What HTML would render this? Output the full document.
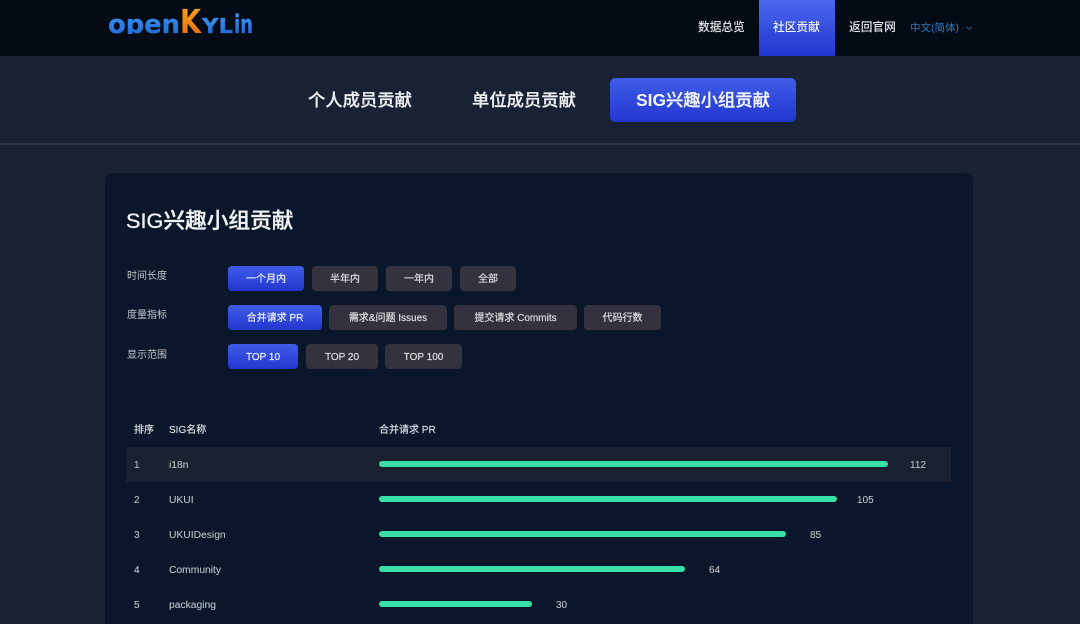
<!DOCTYPE html>
<html lang="zh-CN"><head><meta charset="utf-8"><title>openKylin</title>
<style>
html,body{margin:0;padding:0;width:1080px;height:624px;overflow:hidden;background:#192234}
body{position:relative;font-family:"Liberation Sans","Noto Sans CJK SC",sans-serif;color:#e6e8ec}
div{position:absolute;white-space:nowrap}
.hd{left:0;top:0;width:1080px;height:56px;background:#050b14}
.nav{top:20px;font-size:11.7px;line-height:16px;font-weight:500;color:#e4e6ea}
.act{left:759px;top:0;width:76px;height:56px;background:linear-gradient(180deg,#4a68ee,#2236cf)}
.tab{top:88px;font-size:17.33px;line-height:24px;font-weight:500;color:#eceef1;-webkit-text-stroke:.25px currentColor}
.sel{left:610px;top:78px;width:186px;height:44px;border-radius:5px;background:linear-gradient(180deg,#3f5ce8,#2337cf);text-align:center;line-height:44px;font-size:17.33px;font-weight:500;color:#f2f4f8;-webkit-text-stroke:.25px currentColor}
.sel b{font-weight:700;-webkit-text-stroke:0}
.line{left:0;top:143px;width:1080px;height:2px;background:#2b3447}
.card{left:105px;top:173px;width:868px;height:460px;background:#0a172a;border-radius:8px}
.title{left:126px;top:206px;font-size:21.7px;line-height:30px;font-weight:500;color:#f0f2f5;-webkit-text-stroke:.3px currentColor}
.lb{left:127px;font-size:10px;line-height:14px;color:#c4c8ce}
.b{height:25px;line-height:27px;border-radius:4px;background:#33323e;color:#dcdde0;font-size:10px;text-align:center;font-weight:400;-webkit-text-stroke:.2px currentColor}
.on{background:linear-gradient(180deg,#3f5ce8,#2337cf);color:#eef1fa}
.th{top:424px;font-size:10px;line-height:14px;font-weight:400;color:#d8dade;-webkit-text-stroke:.2px currentColor}
.row{left:126px;top:447px;width:825px;height:35px;background:#1a2130}
.t{font-size:10px;line-height:14px;color:#bcc0c7;-webkit-text-stroke:.1px currentColor;margin-top:1px}
.n{font-size:10.3px}
.bar{left:379px;height:6px;border-radius:3px;background:#38e0a8}
</style></head><body>
<div class="hd"></div>
<svg style="position:absolute;left:0;top:0" width="300" height="56" viewBox="0 0 300 56">
<defs>
<linearGradient id="bl" x1="0" y1="0" x2="0" y2="1"><stop offset="0" stop-color="#3f9cf8"/><stop offset="1" stop-color="#1c5fd0"/></linearGradient>
<linearGradient id="or" x1="0" y1="0" x2="0" y2="1"><stop offset="0" stop-color="#f9a91e"/><stop offset="1" stop-color="#e9660f"/></linearGradient>
<clipPath id="cp"><rect x="100" y="5" width="170" height="29"/></clipPath>
</defs>
<g clip-path="url(#cp)" font-family="'DejaVu Sans',sans-serif" font-weight="700">
<text x="108" y="33" font-size="26" fill="url(#bl)" stroke="#2a78e4" stroke-width=".3" textLength="72" lengthAdjust="spacingAndGlyphs">open</text>
<text x="180" y="33" font-size="33" fill="url(#or)" textLength="21" lengthAdjust="spacingAndGlyphs">K</text>
<text x="202" y="33" font-size="20.5" fill="url(#bl)" stroke="#2a78e4" stroke-width=".3" textLength="31" lengthAdjust="spacingAndGlyphs">YL</text>
<text x="234" y="33" font-size="26" fill="url(#bl)" stroke="#2a78e4" stroke-width=".3" textLength="19" lengthAdjust="spacingAndGlyphs">in</text>
</g>
</svg>
<div class="act"></div>
<div class="nav" style="left:698px">数据总览</div>
<div class="nav" style="left:773px;color:#f2f4f8">社区贡献</div>
<div class="nav" style="left:849px">返回官网</div>
<div class="nav" style="left:910px;font-size:10.5px;color:#2f7cc4;font-weight:400">中文(简体)</div>
<svg style="position:absolute;left:965px;top:25px" width="8" height="6" viewBox="0 0 8 6"><path d="M1 1.5L4 4.5L7 1.5" fill="none" stroke="#264f78" stroke-width="1"/></svg>
<div class="tab" style="left:308px">个人成员贡献</div>
<div class="tab" style="left:472px">单位成员贡献</div>
<div class="sel"><b>SIG</b>兴趣小组贡献</div>
<div class="line"></div>
<div class="card"></div>
<div class="title">SIG兴趣小组贡献</div>
<div class="lb" style="top:270px">时间长度</div>
<div class="lb" style="top:309px">度量指标</div>
<div class="lb" style="top:349px">显示范围</div>
<div class="b on" style="left:228px;top:266px;width:76px">一个月内</div>
<div class="b" style="left:312px;top:266px;width:66px">半年内</div>
<div class="b" style="left:386px;top:266px;width:66px">一年内</div>
<div class="b" style="left:460px;top:266px;width:56px">全部</div>
<div class="b on" style="left:228px;top:305px;width:94px">合并请求 PR</div>
<div class="b" style="left:329px;top:305px;width:118px">需求&amp;问题 Issues</div>
<div class="b" style="left:454px;top:305px;width:123px">提交请求 Commits</div>
<div class="b" style="left:584px;top:305px;width:77px">代码行数</div>
<div class="b on" style="left:228px;top:344px;width:70px">TOP 10</div>
<div class="b" style="left:306px;top:344px;width:72px">TOP 20</div>
<div class="b" style="left:385px;top:344px;width:77px">TOP 100</div>
<div class="th" style="left:134px">排序</div>
<div class="th" style="left:169px">SIG名称</div>
<div class="th" style="left:379px">合并请求 PR</div>
<div class="row"></div>
<div class="t" style="left:134px;top:458px">1</div><div class="t n" style="left:169px;top:458px">i18n</div>
<div class="bar" style="top:461px;width:509px"></div><div class="t" style="left:910px;top:458px">112</div>
<div class="t" style="left:134px;top:493px">2</div><div class="t n" style="left:169px;top:493px">UKUI</div>
<div class="bar" style="top:496px;width:458px"></div><div class="t" style="left:857px;top:493px">105</div>
<div class="t" style="left:134px;top:528px">3</div><div class="t n" style="left:169px;top:528px">UKUIDesign</div>
<div class="bar" style="top:531px;width:407px"></div><div class="t" style="left:810px;top:528px">85</div>
<div class="t" style="left:134px;top:563px">4</div><div class="t n" style="left:169px;top:563px">Community</div>
<div class="bar" style="top:566px;width:306px"></div><div class="t" style="left:709px;top:563px">64</div>
<div class="t" style="left:134px;top:598px">5</div><div class="t n" style="left:169px;top:598px">packaging</div>
<div class="bar" style="top:601px;width:153px"></div><div class="t" style="left:556px;top:598px">30</div>
</body></html>
